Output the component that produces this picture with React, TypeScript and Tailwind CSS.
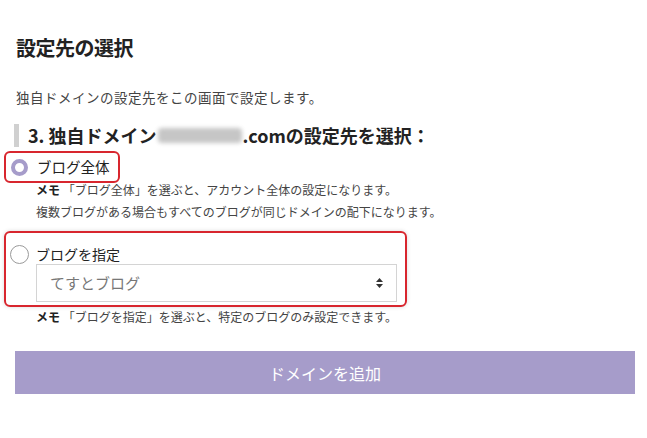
const jp = { fontFamily: '"Noto Sans CJK JP", "Noto Sans", sans-serif' }

function Radio({ checked }: { checked?: boolean }) {
  return checked ? (
    <span className="block w-[17px] h-[17px] rounded-full border-[4px] border-[#a69cca] bg-white shrink-0" />
  ) : (
    <span className="block w-[19px] h-[19px] rounded-full border border-[#9a9a9a] bg-white shrink-0" />
  )
}

function Memo({ children }: { children: React.ReactNode }) {
  return (
    <div className="text-[12px] text-[#444]">
      <span className="font-bold text-[#222]">メモ</span> {children}
    </div>
  )
}

export default function App() {
  return (
    <div className="w-[647px] h-[438px] bg-white overflow-hidden" style={jp}>
      <div className="pl-[16px] pr-[13px] pt-[34px]">
        <h2 className="text-[20px] leading-[28px] font-bold text-[#222] tracking-[-0.5px]">設定先の選択</h2>
        <p className="mt-[25px] text-[13.5px] leading-[20px] text-[#444] tracking-[0.5px]">
          独自ドメインの設定先をこの画面で設定します。
        </p>

        <h3 className="mt-[17px] ml-[-2px] border-l-[5px] border-[#d0d0d0] pl-[9px] text-[18px] leading-[23px] font-bold text-[#222] flex items-center">
          3. 独自ドメイン
          <span className="inline-block w-[84px] h-[15px] bg-[#c6c6c6] blur-[2px] rounded-sm mx-[1px]" />
          .comの設定先を選択：
        </h3>

        <div className="mt-[4px] ml-[-12px] inline-flex items-center gap-[9px] border-2 border-[#d8262e] rounded-[6px] pl-[5px] pr-[8px] h-[32px]">
          <Radio checked />
          <span className="text-[14.5px] text-[#222]">ブログ全体</span>
        </div>

        <div className="ml-[20px] mt-[-4px] leading-[22px]">
          <Memo>「ブログ全体」を選ぶと、アカウント全体の設定になります。</Memo>
          <div className="text-[12px] text-[#444]">複数ブログがある場合もすべてのブログが同じドメインの配下になります。</div>
        </div>

        <div className="mt-[8px] ml-[-12px] w-[403px] border-2 border-[#d8262e] rounded-[6px] pt-[11px] pb-[3px] pl-[4px] pr-[8px] shadow-[0_0_4px_rgba(0,0,0,0.15)]">
          <div className="flex items-center gap-[7px] h-[20px]">
            <Radio />
            <span className="text-[14px] text-[#222]">ブログを指定</span>
          </div>
          <div className="ml-[26px] h-[38px] border border-[#d4d4d4] bg-white flex items-center justify-between pl-[13px] pr-[12px]">
            <span className="text-[15px] text-[#777]">てすとブログ</span>
            <svg width="9" height="12" viewBox="0 0 9 12">
              <path d="M4.5 1 L8 5 H1 Z" fill="#333" />
              <path d="M4.5 11 L8 7 H1 Z" fill="#333" />
            </svg>
          </div>
        </div>

        <div className="ml-[20px] mt-[-1px] leading-[22px]">
          <Memo>「ブログを指定」を選ぶと、特定のブログのみ設定できます。</Memo>
        </div>

        <button className="mt-[23px] ml-[-1px] w-[620px] h-[43px] bg-[#a69cca] text-white text-[16px] flex items-center justify-center">
          ドメインを追加
        </button>
      </div>
    </div>
  )
}
